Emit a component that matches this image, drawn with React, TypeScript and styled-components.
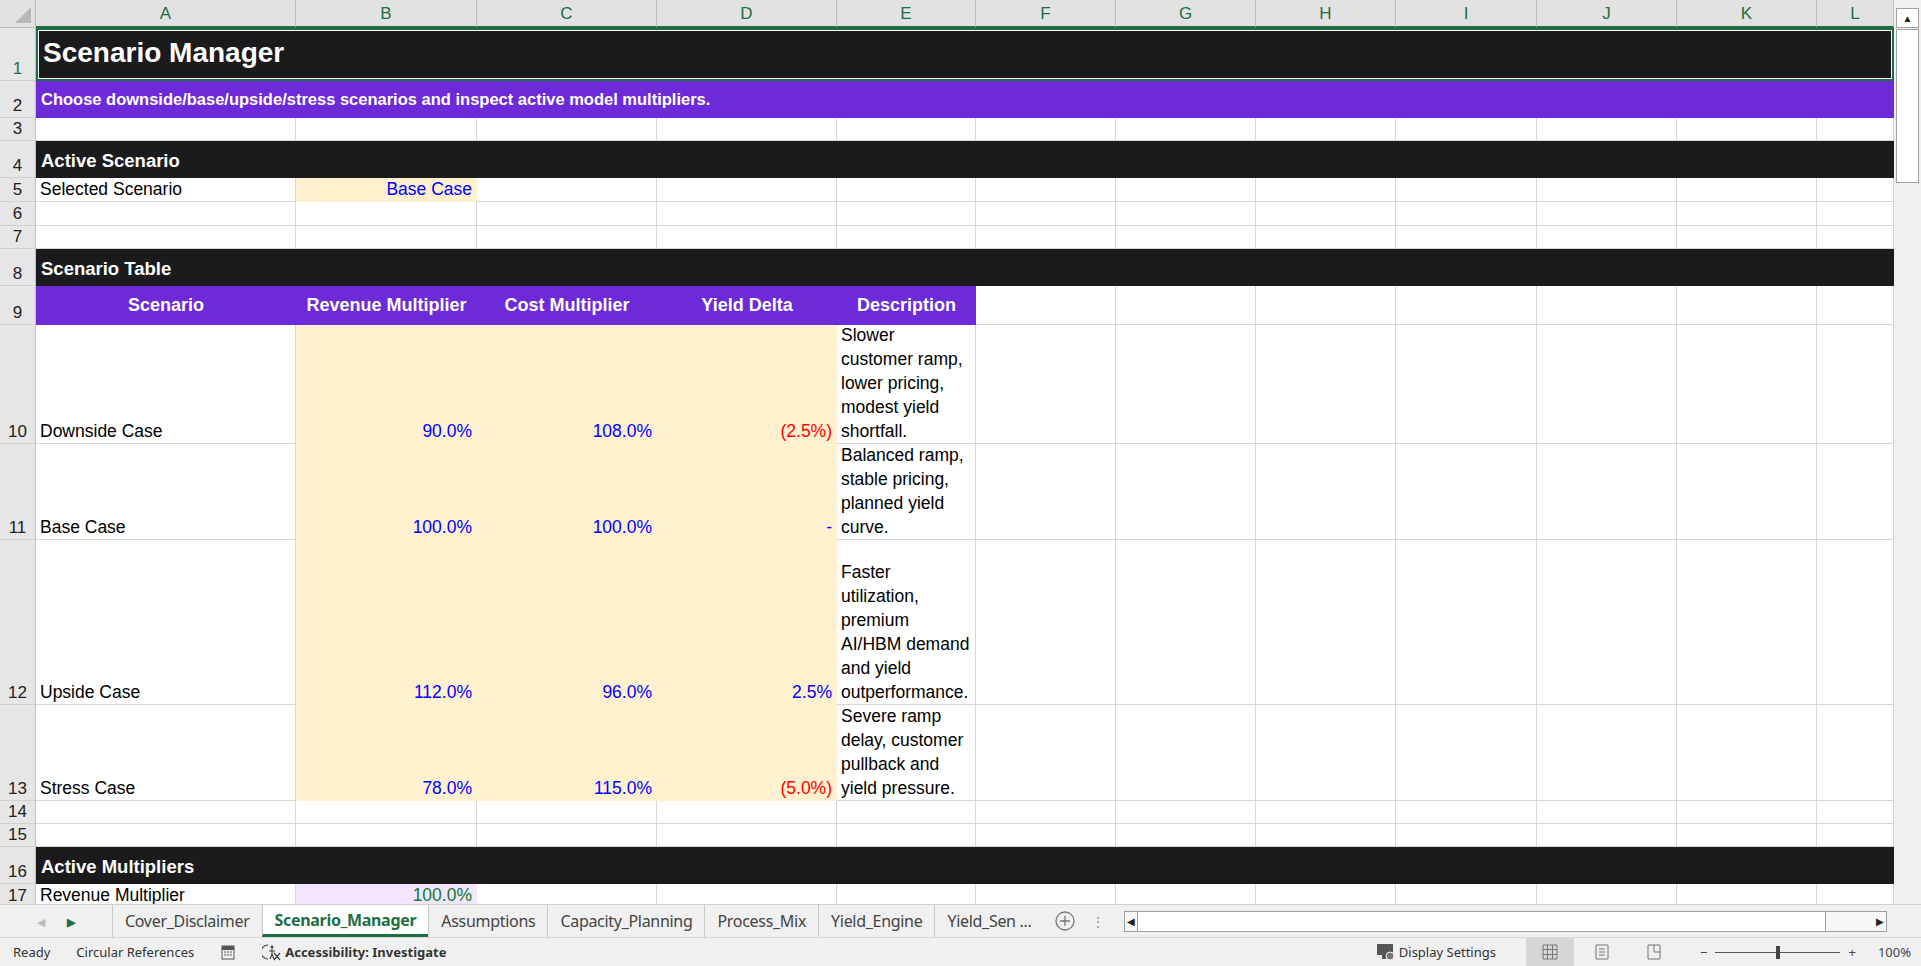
import React from "react";
import styled, { createGlobalStyle, css } from "styled-components";

const Global = createGlobalStyle`
  html, body { margin: 0; padding: 0; background: #fff; overflow: hidden; }
  body { font-family: "Liberation Sans", Arial, sans-serif; }
`;

const COLS = "36px 260px 181px 180px 180px 139px 140px 140px 140px 141px 140px 140px 77px";
const BLACK = "#1b1b1d";
const PURPLE = "#6d2ad8";
const CREAM = "#fff1cf";

const Screen = styled.div`
  width: 1921px;
  height: 966px;
  display: flex;
  flex-direction: column;
  background: #fff;
  overflow: hidden;
`;

const Main = styled.div`
  flex: 1;
  display: flex;
  overflow: hidden;
`;

const Sheet = styled.div`
  width: 1894px;
  overflow: hidden;
  display: flex;
  flex-direction: column;
`;

const Row = styled.div<{ $h: number }>`
  display: grid;
  grid-template-columns: ${COLS};
  height: ${(p) => p.$h}px;
  flex: none;
`;

const ColHead = styled.div`
  background: #e2e2e2;
  border-right: 1px solid #bdbdbd;
  border-bottom: 2px solid #1f6e43;
  color: #1f6e43;
  font-size: 17px;
  display: flex;
  align-items: flex-end;
  justify-content: center;
  padding-bottom: 2px;
  box-sizing: border-box;
`;

const Corner = styled(ColHead)`
  border-bottom: 1px solid #bdbdbd;
  position: relative;
  &::after {
    content: "";
    position: absolute;
    right: 4px;
    bottom: 4px;
    border-left: 16px solid transparent;
    border-bottom: 16px solid #b8b8b8;
  }
`;

const RowNum = styled.div<{ $active?: boolean }>`
  background: #e6e6e6;
  border-right: 1px solid #bdbdbd;
  border-bottom: 1px solid #d0d0d0;
  color: ${(p) => (p.$active ? "#1f6e43" : "#222")};
  font-size: 17px;
  display: flex;
  align-items: flex-end;
  justify-content: center;
  padding-bottom: 1px;
  box-sizing: border-box;
`;

const Cell = styled.div<{ $bg?: string; $align?: string; $color?: string }>`
  border-right: 1px solid ${(p) => (p.$bg ? p.$bg : "#d6d6d6")};
  border-bottom: 1px solid ${(p) => (p.$bg ? p.$bg : "#d6d6d6")};
  background: ${(p) => p.$bg || "#fff"};
  color: ${(p) => p.$color || "#000"};
  font-size: 17.5px;
  display: flex;
  align-items: flex-end;
  justify-content: ${(p) => (p.$align === "right" ? "flex-end" : "flex-start")};
  padding: 0 4px 0 4px;
  box-sizing: border-box;
  white-space: nowrap;
  overflow: hidden;
  line-height: 24px;
`;

const Wrap = styled(Cell)`
  white-space: normal;
  line-height: 24px;
`;

const Banner = styled.div<{ $kind: "title" | "sub" | "section" }>`
  grid-column: 2 / -1;
  display: flex;
  align-items: flex-end;
  padding: 0 5px 6px;
  box-sizing: border-box;
  color: #fff;
  font-weight: bold;
  ${(p) =>
    p.$kind === "title" &&
    css`
      background: ${BLACK};
      font-size: 28px;
      padding-bottom: 10px;
      border: 2px solid #1f6e43;
      box-shadow: inset 0 0 0 1px #fff;
    `}
  ${(p) =>
    p.$kind === "sub" &&
    css`
      background: ${PURPLE};
      font-size: 16.5px;
      padding-bottom: 9px;
    `}
  ${(p) =>
    p.$kind === "section" &&
    css`
      background: ${BLACK};
      font-size: 18.5px;
      padding-bottom: 6px;
    `}
`;

const HeadCell = styled.div`
  background: ${PURPLE};
  color: #fff;
  font-weight: bold;
  font-size: 18px;
  display: flex;
  align-items: center;
  justify-content: center;
  box-sizing: border-box;
`;

const VScroll = styled.div`
  width: 27px;
  background: #f0f0f0;
  display: flex;
  flex-direction: column;
  align-items: center;
  padding-top: 8px;
  box-sizing: border-box;
`;

const ScrollBtn = styled.div`
  width: 21px;
  height: 18px;
  border: 1px solid #a0a0a0;
  background: #fff;
  display: flex;
  align-items: center;
  justify-content: center;
  font-size: 10px;
  color: #222;
`;

const Thumb = styled.div`
  width: 21px;
  height: 152px;
  border: 1px solid #a0a0a0;
  background: #fff;
  margin-top: 1px;
`;

const TabBar = styled.div`
  height: 32px;
  background: #f0f0f0;
  display: flex;
  align-items: stretch;
  border-top: 1px solid #d0d0d0;
  font-family: "Noto Sans", "Open Sans", sans-serif;
  flex: none;
`;

const Arrows = styled.div`
  width: 112px;
  flex: none;
  display: flex;
  align-items: center;
  justify-content: center;
  gap: 22px;
  font-size: 11px;
  color: #bbb;
  & b { color: #1f6e43; }
`;

const Tab = styled.div<{ $active?: boolean }>`
  flex: none;
  padding: 0 12px;
  display: flex;
  align-items: center;
  font-size: 16px;
  letter-spacing: -0.3px;
  white-space: nowrap;
  color: ${(p) => (p.$active ? "#1f6e43" : "#444")};
  font-weight: ${(p) => (p.$active ? "bold" : "normal")};
  background: ${(p) => (p.$active ? "#fff" : "transparent")};
  border-left: 1px solid #c8c8c8;
  border-bottom: ${(p) => (p.$active ? "3px solid #1f6e43" : "none")};
`;

const HScroll = styled.div`
  flex: 1;
  min-width: 0;
  display: flex;
  align-items: center;
  margin-left: 10px;
  gap: 6px;
  color: #888;
  padding-right: 34px;
`;

const HTrack = styled.div`
  margin-left: 14px;
  flex: 1;
  height: 19px;
  border: 1px solid #a0a0a0;
  background: #f7f7f7;
  display: flex;
  align-items: center;
  justify-content: space-between;
  font-size: 10px;
  color: #222;
  & span { width: 12px; text-align: center; }
`;

const HThumb = styled.div`
  flex: 1;
  height: 100%;
  margin-right: 48px;
  border-left: 1px solid #a0a0a0;
  border-right: 1px solid #a0a0a0;
  background: #fff;
`;

const Status = styled.div`
  height: 28px;
  background: #f0f0f0;
  border-top: 1px solid #d8d8d8;
  display: flex;
  align-items: center;
  font-family: "Noto Sans", "Open Sans", sans-serif;
  font-size: 13px;
  color: #333;
  padding-left: 13px;
  flex: none;
`;

const StatusItem = styled.span<{ $bold?: boolean }>`
  margin-right: 26px;
  font-weight: ${(p) => (p.$bold ? "bold" : "normal")};
  display: flex;
  align-items: center;
  gap: 3px;
`;

const Spacer = styled.div`
  flex: 1;
`;

const ViewBtn = styled.div<{ $on?: boolean }>`
  width: 48px;
  height: 100%;
  display: flex;
  align-items: center;
  justify-content: center;
  background: ${(p) => (p.$on ? "#d6d6d6" : "transparent")};
  color: #777;
  margin-left: 4px;
`;

const Zoom = styled.div`
  display: flex;
  align-items: center;
  gap: 8px;
  margin-left: 22px;
  margin-right: 10px;
  color: #444;
`;

const Slider = styled.div`
  width: 125px;
  height: 1px;
  background: #555;
  position: relative;
  &::after {
    content: "";
    position: absolute;
    left: 61px;
    top: -6px;
    width: 4px;
    height: 13px;
    background: #444;
  }
`;

const letters = ["A", "B", "C", "D", "E", "F", "G", "H", "I", "J", "K", "L"];

const Blank = ({ n, h }: { n: number; h: number }) => (
  <Row $h={h}>
    <RowNum>{n}</RowNum>
    {letters.map((l) => (
      <Cell key={l} />
    ))}
  </Row>
);

const scenarios = [
  { n: 10, h: 119, name: "Downside Case", rev: "90.0%", cost: "108.0%", yd: "(2.5%)", red: true, desc: "Slower customer ramp, lower pricing, modest yield shortfall." },
  { n: 11, h: 96, name: "Base Case", rev: "100.0%", cost: "100.0%", yd: "-", red: false, desc: "Balanced ramp, stable pricing, planned yield curve." },
  { n: 12, h: 165, name: "Upside Case", rev: "112.0%", cost: "96.0%", yd: "2.5%", red: false, desc: "Faster utilization, premium AI/HBM demand and yield outperformance." },
  { n: 13, h: 96, name: "Stress Case", rev: "78.0%", cost: "115.0%", yd: "(5.0%)", red: true, desc: "Severe ramp delay, customer pullback and yield pressure." },
];

const Section = ({ n, title }: { n: number; title: string }) => (
  <Row $h={37}>
    <RowNum>{n}</RowNum>
    <Banner $kind="section">{title}</Banner>
  </Row>
);

export default function App() {
  return (
    <Screen>
      <Global />
      <Main>
        <Sheet>
          <Row $h={28}>
            <Corner />
            {letters.map((l) => (
              <ColHead key={l}>{l}</ColHead>
            ))}
          </Row>
          <Row $h={53}>
            <RowNum $active>1</RowNum>
            <Banner $kind="title">Scenario Manager</Banner>
          </Row>
          <Row $h={37}>
            <RowNum>2</RowNum>
            <Banner $kind="sub">Choose downside/base/upside/stress scenarios and inspect active model multipliers.</Banner>
          </Row>
          <Blank n={3} h={23} />
          <Section n={4} title="Active Scenario" />
          <Row $h={24}>
            <RowNum>5</RowNum>
            <Cell>Selected Scenario</Cell>
            <Cell $bg={CREAM} $align="right" $color="#0000ff">Base Case</Cell>
            {letters.slice(2).map((l) => (
              <Cell key={l} />
            ))}
          </Row>
          <Blank n={6} h={24} />
          <Blank n={7} h={23} />
          <Section n={8} title="Scenario Table" />
          <Row $h={39}>
            <RowNum>9</RowNum>
            <HeadCell>Scenario</HeadCell>
            <HeadCell>Revenue Multiplier</HeadCell>
            <HeadCell>Cost Multiplier</HeadCell>
            <HeadCell>Yield Delta</HeadCell>
            <HeadCell>Description</HeadCell>
            {letters.slice(5).map((l) => (
              <Cell key={l} />
            ))}
          </Row>
          {scenarios.map((s) => (
            <Row $h={s.h} key={s.n}>
              <RowNum>{s.n}</RowNum>
              <Cell>{s.name}</Cell>
              <Cell $bg={CREAM} $align="right" $color="#0000ff">{s.rev}</Cell>
              <Cell $bg={CREAM} $align="right" $color="#0000ff">{s.cost}</Cell>
              <Cell $bg={CREAM} $align="right" $color={s.red ? "#ff0000" : "#0000ff"}>
                {s.yd}
              </Cell>
              <Wrap>{s.desc}</Wrap>
              {letters.slice(5).map((l) => (
                <Cell key={l} />
              ))}
            </Row>
          ))}
          <Blank n={14} h={23} />
          <Blank n={15} h={23} />
          <Section n={16} title="Active Multipliers" />
          <Row $h={24}>
            <RowNum>17</RowNum>
            <Cell>Revenue Multiplier</Cell>
            <Cell $bg="#f1e6fd" $align="right" $color="#127a2e">100.0%</Cell>
            {letters.slice(2).map((l) => (
              <Cell key={l} />
            ))}
          </Row>
        </Sheet>
        <VScroll>
          <ScrollBtn>▲</ScrollBtn>
          <Thumb />
        </VScroll>
      </Main>
      <TabBar>
        <Arrows>
          <span>◀</span>
          <b>▶</b>
        </Arrows>
        <Tab>Cover_Disclaimer</Tab>
        <Tab $active>Scenario_Manager</Tab>
        <Tab>Assumptions</Tab>
        <Tab>Capacity_Planning</Tab>
        <Tab>Process_Mix</Tab>
        <Tab>Yield_Engine</Tab>
        <Tab>Yield_Sen ...</Tab>
        <HScroll>
          <svg width="22" height="22" viewBox="0 0 22 22">
            <circle cx="11" cy="11" r="9" fill="none" stroke="#777" strokeWidth="1.3" />
            <path d="M11 6v10M6 11h10" stroke="#777" strokeWidth="1.3" />
          </svg>
          <span style={{ fontSize: 12, marginLeft: 10 }}>⋮</span>
          <HTrack>
            <span>◀</span>
            <HThumb />
            <span>▶</span>
          </HTrack>
        </HScroll>
      </TabBar>
      <Status>
        <StatusItem>Ready</StatusItem>
        <StatusItem>Circular References</StatusItem>
        <StatusItem>
          <svg width="16" height="16" viewBox="0 0 16 16">
            <rect x="2" y="2" width="12" height="13" fill="none" stroke="#555" />
            <rect x="2" y="2" width="12" height="4" fill="#555" />
            <path d="M4 8h2M7 8h2M10 8h2M4 11h2M7 11h2M10 11h2" stroke="#555" />
          </svg>
        </StatusItem>
        <StatusItem $bold>
          <svg width="20" height="18" viewBox="0 0 20 18">
            <path d="M6 2a7 7 0 0 0 0 14" fill="none" stroke="#444" strokeWidth="1.2" />
            <circle cx="10" cy="4" r="1.5" fill="#444" />
            <path d="M10 6v5M7 8h6M8 16l2-5 2 5M12 10l6 7M18 10l-6 7" stroke="#444" strokeWidth="1.2" fill="none" />
          </svg>
          Accessibility: Investigate
        </StatusItem>
        <Spacer />
        <StatusItem>
          <svg width="20" height="18" viewBox="0 0 20 18">
            <rect x="1" y="1" width="16" height="11" fill="#555" />
            <rect x="6" y="12" width="4" height="4" fill="#555" />
            <circle cx="14" cy="13" r="4" fill="#777" stroke="#f0f0f0" />
          </svg>
          Display Settings
        </StatusItem>
        <ViewBtn $on>
          <svg width="16" height="16" viewBox="0 0 16 16">
            <path d="M1 1h14v14H1zM1 5.5h14M1 10.5h14M5.5 1v14M10.5 1v14" fill="none" stroke="#777" />
          </svg>
        </ViewBtn>
        <ViewBtn>
          <svg width="16" height="16" viewBox="0 0 16 16">
            <path d="M2 1h12v14H2zM5 5h6M5 8h6M5 11h6" fill="none" stroke="#777" />
          </svg>
        </ViewBtn>
        <ViewBtn>
          <svg width="16" height="16" viewBox="0 0 16 16">
            <path d="M2 1h12v14H2zM8 1v7h6" fill="none" stroke="#777" />
          </svg>
        </ViewBtn>
        <Zoom>
          <span>−</span>
          <Slider />
          <span>+</span>
          <span style={{ marginLeft: 14 }}>100%</span>
        </Zoom>
      </Status>
    </Screen>
  );
}
